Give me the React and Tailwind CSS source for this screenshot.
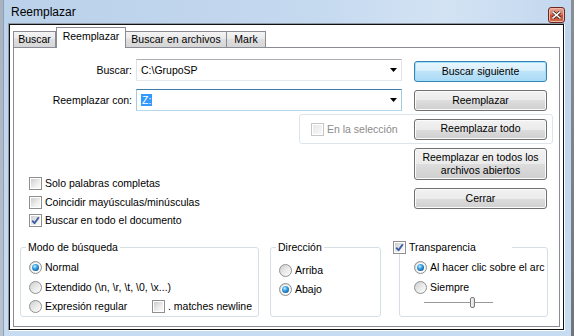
import React from "react";

const font = { fontFamily: '"Liberation Sans", Arial, sans-serif' };

function Radio({ checked }) {
  return (
    <span className="flex h-[13px] w-[13px] shrink-0 items-center justify-center rounded-full border border-[#8e8f8f] bg-[linear-gradient(135deg,#cfcfcf_0%,#e9e9e9_50%,#ffffff_100%)]">
      {checked && (
        <span className="flex h-[9px] w-[9px] items-center justify-center rounded-full bg-white">
          <span className="h-[7px] w-[7px] rounded-full bg-[radial-gradient(circle_at_40%_35%,#c4f1ff_0%,#3fa6e8_35%,#115f9f_75%,#0a3b69_100%)]" />
        </span>
      )}
    </span>
  );
}

function Check({ checked, disabled }) {
  return (
    <span
      className={`flex h-[13px] w-[13px] shrink-0 items-center justify-center border bg-white p-[1px] ${
        disabled ? "border-[#c6c6c6]" : "border-[#8f8f8f]"
      }`}
    >
      <span
        className={`flex h-full w-full items-center justify-center ${
          disabled
            ? "bg-[linear-gradient(135deg,#e8e8e8,#f8f8f8)]"
            : "bg-[linear-gradient(135deg,#cdcdcd,#eeeeee_60%,#fafafa)]"
        }`}
      >
        {checked && (
          <svg width="9" height="9" viewBox="0 0 9 9">
            <path d="M1.2 4.6 L3.5 7.2 L7.8 1.2" fill="none" stroke="#3b5ea0" strokeWidth="1.9" strokeLinejoin="round" />
          </svg>
        )}
      </span>
    </span>
  );
}

function Btn({ children, def, className = "" }) {
  return (
    <div
      className={`flex shrink-0 items-center justify-center rounded-[3px] border text-center text-black ${
        def
          ? "border-[#3c7fb1] bg-[linear-gradient(#e9f6fd_0%,#d6eefb_50%,#bde4f9_50%,#aad9f5_100%)] shadow-[inset_0_0_0_1px_#9fe2fb]"
          : "border-[#707070] bg-[linear-gradient(#f2f2f2_0%,#ebebeb_50%,#dddddd_50%,#cfcfcf_100%)] shadow-[inset_0_0_0_1px_#fbfbfb]"
      } ${className}`}
    >
      {children}
    </div>
  );
}

function Combo({ children, focused }) {
  return (
    <div
      className={`ml-[4px] flex h-[22px] w-[266px] items-center border bg-white pl-[4px] ${
        focused
          ? "border-[#a4c9e3] border-t-[#3d7bad] border-b-[#b7d9ed]"
          : "border-[#e2e3ea] border-t-[#abadb3] border-b-[#e3e9ef]"
      }`}
    >
      <span className="leading-[13px]">{children}</span>
      <svg className="ml-auto mr-[4px]" width="7" height="4" viewBox="0 0 7 4">
        <path d="M0 0H7L3.5 4Z" fill="#000" />
      </svg>
    </div>
  );
}

function CheckRow({ checked, children, className = "" }) {
  return (
    <div className={`flex h-[13px] items-center ${className}`}>
      <Check checked={checked} />
      <span className="ml-[3px] whitespace-nowrap leading-[13px]">{children}</span>
    </div>
  );
}

function RadioRow({ checked, children, className = "" }) {
  return (
    <div className={`flex h-[13px] items-center ${className}`}>
      <Radio checked={checked} />
      <span className="ml-[3px] whitespace-nowrap leading-[13px]">{children}</span>
    </div>
  );
}

export default function App() {
  return (
    <div className="flex h-[336px] w-[574px] overflow-hidden bg-[#c3d7ee] text-[10.5px] text-black" style={font}>
      {/* desktop strip left */}
      <div className="w-[3px] shrink-0 bg-[linear-gradient(#a9b2bf,#b9c3cf)]" />
      {/* window */}
      <div className="flex w-[568px] shrink-0 flex-col border-l border-[#8da0b8] bg-[linear-gradient(180deg,#bcd3ec_0%,#c3d8ef_60%,#c8dcf1_100%)]">
        {/* title bar */}
        <div className="flex h-[23px] shrink-0 items-start bg-[linear-gradient(90deg,#bad1ea_0%,#c5d9ef_55%,#d3e3f4_78%,#c2d7ee_100%)]">
          <span className="mt-[5px] pl-[7px] text-[12px] leading-[14px] text-black">Reemplazar</span>
          <div className="ml-auto mr-[6px] mt-[7px] flex h-[16px] w-[17px] items-center justify-center rounded-[3px] border border-[#6b2a20] bg-[linear-gradient(#e8a897_0%,#d9765f_45%,#c44a2f_55%,#d26a4c_100%)] shadow-[inset_0_0_0_1px_#f0b8a8]">
            <svg width="9" height="8" viewBox="0 0 9 8">
              <path d="M1 1L8 7M8 1L1 7" stroke="#3a1a14" strokeWidth="3" strokeLinecap="square" />
              <path d="M1 1L8 7M8 1L1 7" stroke="#ffffff" strokeWidth="1.6" strokeLinecap="square" />
            </svg>
          </div>
        </div>
        {/* client */}
        <div className="ml-[4px] h-[308px] w-[557px] shrink-0 border border-[#8f9aa6] border-b-white border-r-white">
          <div className="flex h-full w-full flex-col border border-[#111111] bg-white px-[3px] pb-[2px] pt-[2px]">
            {/* tabs */}
            <div className="flex h-[20px] shrink-0 items-end">
              <div className="flex h-[16px] w-[43px] items-center justify-center border border-b-0 border-[#898c95] bg-[linear-gradient(#f4f4f4,#e8e8e8_50%,#dedede_50%,#d6d6d6)] leading-[13px]">
                Buscar
              </div>
              <div className="relative z-10 -mb-px flex h-[21px] w-[70px] items-center justify-center border border-b-0 border-[#898c95] bg-white pb-[3px] leading-[13px]">
                Reemplazar
              </div>
              <div className="flex h-[16px] w-[101px] items-center justify-center border border-b-0 border-l-0 border-[#898c95] bg-[linear-gradient(#f4f4f4,#e8e8e8_50%,#dedede_50%,#d6d6d6)] leading-[13px]">
                Buscar en archivos
              </div>
              <div className="flex h-[16px] w-[39px] items-center justify-center border border-b-0 border-l-0 border-[#898c95] bg-[linear-gradient(#f4f4f4,#e8e8e8_50%,#dedede_50%,#d6d6d6)] leading-[13px]">
                Mark
              </div>
            </div>
            {/* panel */}
            <div className="flex flex-1 flex-col border border-[#898c95] bg-white">
              {/* Row A */}
              <div className="mt-[11px] flex h-[22px] items-start">
                <span className="w-[118px] text-right leading-[22px]">Buscar:</span>
                <Combo>C:\GrupoSP</Combo>
                <Btn def className="ml-[12px] mt-[2px] h-[21px] w-[133px]">Buscar siguiente</Btn>
              </div>
              {/* Row B */}
              <div className="mt-[8px] flex h-[22px] items-start">
                <span className="w-[118px] text-right leading-[22px]">Reemplazar con:</span>
                <Combo focused>
                  <span className="bg-[#3399ff] px-[1px] text-white">Z:</span>
                </Combo>
                <Btn className="ml-[12px] mt-[1px] h-[21px] w-[133px]">Reemplazar</Btn>
              </div>
              {/* Row C */}
              <div className="ml-[285px] mt-[3px] flex h-[30px] w-[254px] items-center rounded-[3px] border border-[#dde5ec] pl-[11px]">
                <Check disabled />
                <span className="ml-[3px] whitespace-nowrap leading-[13px] text-[#8a8a8a]">En la selección</span>
                <Btn className="ml-auto mr-[5px] h-[21px] w-[133px]">Reemplazar todo</Btn>
              </div>
              {/* Middle */}
              <div className="flex">
                <div className="ml-[15px] flex flex-col pt-[33px]">
                  <CheckRow>Solo palabras completas</CheckRow>
                  <CheckRow className="mt-[6px]">Coincidir mayúsculas/minúsculas</CheckRow>
                  <CheckRow checked className="mt-[5px]">Buscar en todo el documento</CheckRow>
                </div>
                <div className="ml-auto mr-[12px] flex flex-col pt-[4px]">
                  <Btn className="h-[32px] w-[133px] leading-[13px]">
                    Reemplazar en todos los
                    <br />
                    archivos abiertos
                  </Btn>
                  <Btn className="mt-[8px] h-[21px] w-[133px]">Cerrar</Btn>
                </div>
              </div>
              {/* Bottom groups */}
              <div className="ml-[6px] mt-[14px] flex items-start">
                <fieldset className="h-[76px] w-[239px] min-w-0 shrink-0 rounded-[3px] border border-[#d5dfe5]">
                  <legend className="ml-[5px] px-[2px] leading-[13px]">Modo de búsqueda</legend>
                  <div className="flex flex-col pl-[8px] pt-[7px]">
                    <RadioRow checked>Normal</RadioRow>
                    <RadioRow className="mt-[7px]">Extendido (\n, \r, \t, \0, \x...)</RadioRow>
                    <div className="mt-[6px] flex h-[13px] items-center">
                      <Radio />
                      <span className="ml-[3px] w-[107px] whitespace-nowrap leading-[13px]">Expresión regular</span>
                      <Check />
                      <span className="ml-[3px] whitespace-nowrap leading-[13px]">. matches newline</span>
                    </div>
                  </div>
                </fieldset>
                <fieldset className="ml-[11px] h-[76px] w-[111px] min-w-0 shrink-0 rounded-[3px] border border-[#d5dfe5]">
                  <legend className="ml-[5px] px-[2px] leading-[13px]">Dirección</legend>
                  <div className="flex flex-col pl-[8px] pt-[10px]">
                    <RadioRow>Arriba</RadioRow>
                    <RadioRow checked className="mt-[6px]">Abajo</RadioRow>
                  </div>
                </fieldset>
                <fieldset className="ml-[18px] h-[76px] w-[149px] min-w-0 shrink-0 rounded-[3px] border border-[#d5dfe5]">
                  <legend className="-ml-[7px] flex w-[119px] items-center leading-[13px]">
                    <Check checked />
                    <span className="ml-[3px] whitespace-nowrap">Transparencia</span>
                  </legend>
                  <div className="flex w-full min-w-0 flex-col pl-[14px] pt-[7px]">
                    <RadioRow checked>Al hacer clic sobre el arc</RadioRow>
                    <RadioRow className="mt-[7px]">Siempre</RadioRow>
                    <div className="relative ml-[10px] mt-[3px] h-[11px] w-[69px]">
                      <div className="absolute left-0 right-0 top-[5px] h-[2px] border-t border-[#9a9a9a] bg-white" />
                      <div className="absolute left-[46px] top-0 h-[11px] w-[5px] rounded-[2px] border border-[#7a7a7a] bg-[linear-gradient(90deg,#f4f4f4,#dcdcdc)]" />
                    </div>
                  </div>
                </fieldset>
              </div>
            </div>
          </div>
        </div>
      </div>
      {/* desktop strip right */}
      <div className="w-[3px] shrink-0 bg-[linear-gradient(#8a8f96,#6f757d)]" />
    </div>
  );
}
